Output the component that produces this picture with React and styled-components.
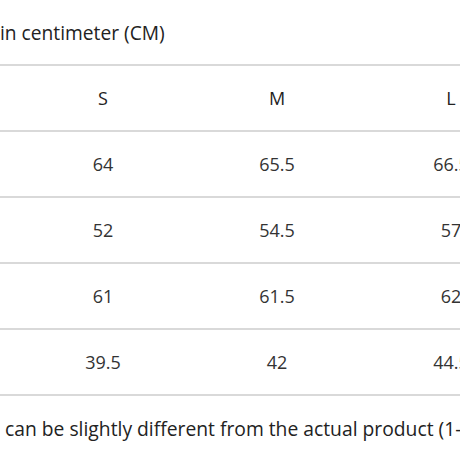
import React from "react";
import styled, { createGlobalStyle } from "styled-components";

const GlobalStyle = createGlobalStyle`
  html, body {
    margin: 0;
    padding: 0;
    background: #fff;
    overflow: hidden;
  }
  body {
    font-family: 'Open Sans', 'Noto Sans', sans-serif;
    color: #222;
  }
`;

const Page = styled.div`
  width: 460px;
  height: 460px;
  overflow: hidden;
`;

const Caption = styled.div`
  height: 64px;
  display: flex;
  align-items: center;
  font-size: 19.2px;
  white-space: nowrap;
  border-bottom: 2px solid #d9d9d9;
`;

const Row = styled.div`
  display: grid;
  grid-template-columns: 16px 174px 174px 174px;
  height: 64px;
  border-bottom: 2px solid #d9d9d9;
  width: max-content;
  min-width: 100%;
`;

const Cell = styled.div`
  display: flex;
  align-items: center;
  justify-content: center;
  font-size: 18px;
  color: ${(p) => (p.$head ? "#222" : "#333")};
  white-space: nowrap;
`;

const Note = styled.div`
  height: 64px;
  display: flex;
  align-items: center;
  font-size: 19.3px;
  white-space: pre;
`;

const sizes = ["S", "M", "L"];
const rows = [
  ["64", "65.5", "66.5"],
  ["52", "54.5", "57"],
  ["61", "61.5", "62"],
  ["39.5", "42", "44.5"],
];

export default function App() {
  return (
    <Page>
      <GlobalStyle />
      <Caption>in centimeter (CM)</Caption>
      <Row>
        <Cell />
        {sizes.map((s) => (
          <Cell $head key={s}>{s}</Cell>
        ))}
      </Row>
      {rows.map((r, i) => (
        <Row key={i}>
          <Cell />
          {r.map((v, j) => (
            <Cell key={j}>{v}</Cell>
          ))}
        </Row>
      ))}
      <Note> can be slightly different from the actual product (1-3cm)</Note>
    </Page>
  );
}
